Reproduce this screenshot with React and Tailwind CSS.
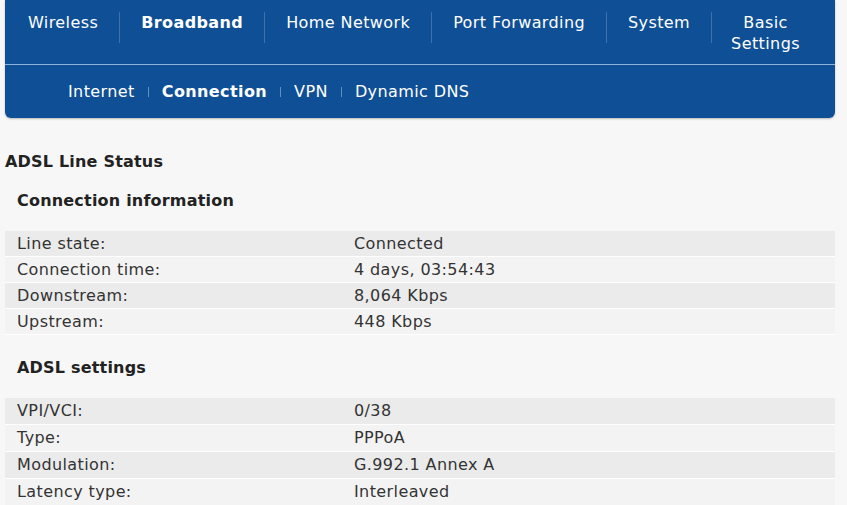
import React from "react";

const topItems = [
  { label: "Wireless" },
  { label: "Broadband", active: true },
  { label: "Home Network" },
  { label: "Port Forwarding" },
  { label: "System" },
];

const subItems = [
  { label: "Internet" },
  { label: "Connection", active: true },
  { label: "VPN" },
  { label: "Dynamic DNS" },
];

const connectionInfo = [
  ["Line state:", "Connected"],
  ["Connection time:", "4 days, 03:54:43"],
  ["Downstream:", "8,064 Kbps"],
  ["Upstream:", "448 Kbps"],
];

const adslSettings = [
  ["VPI/VCI:", "0/38"],
  ["Type:", "PPPoA"],
  ["Modulation:", "G.992.1 Annex A"],
  ["Latency type:", "Interleaved"],
];

const InfoTable = ({ rows, tall }) => (
  <div className="mr-[12px] flex flex-col">
    {rows.map(([label, value], i) => (
      <div
        key={label}
        className={`flex items-center border-b border-white text-[#333] ${
          tall ? "h-[27px]" : "h-[26px]"
        } ${i % 2 === 0 ? "bg-[#ebebeb]" : "bg-[#f3f3f3]"}`}
      >
        <span className="w-[349px] shrink-0 pl-[12px]">{label}</span>
        <span>{value}</span>
      </div>
    ))}
  </div>
);

const App = () => {
  return (
    <div
      className="min-h-[505px] w-full bg-[#f7f7f7] text-[16px] leading-[20px] tracking-[0.4px]"
      style={{ fontFamily: '"DejaVu Sans", Verdana, sans-serif' }}
    >
      <nav className="mx-[5px] mr-[12px] rounded-b-[6px] bg-[#0f4f96] text-white shadow-[0_1px_2px_rgba(0,0,0,0.25)]">
        <div className="flex h-[65px] items-start border-b border-[#8fb4dc] pl-[23px] pt-[12px]">
          {topItems.map((item) => (
            <React.Fragment key={item.label}>
              <span className={`leading-[21px] ${item.active ? "font-bold" : ""}`}>
                {item.label}
              </span>
              <span className="mx-[21px] h-[31px] w-px bg-[#3d72b0]" />
            </React.Fragment>
          ))}
          <span className="-ml-[2px] flex flex-col items-center leading-[21px]">
            <span>Basic</span>
            <span>Settings</span>
          </span>
        </div>
        <div className="flex h-[53px] items-center pl-[63px]">
          {subItems.map((item, i) => (
            <React.Fragment key={item.label}>
              {i > 0 && <span className="mx-[13px] h-[10px] w-px bg-[#5f8fc4]" />}
              <span className={item.active ? "font-bold" : ""}>{item.label}</span>
            </React.Fragment>
          ))}
        </div>
      </nav>

      <h1 className="ml-[5px] mt-[34px] font-bold tracking-[0.2px] text-[#222]">
        ADSL Line Status
      </h1>
      <h2 className="ml-[17px] mt-[19px] font-bold tracking-[0.2px] text-[#222]">
        Connection information
      </h2>
      <div className="ml-[5px] mt-[20px]">
        <InfoTable rows={connectionInfo} />
      </div>

      <h2 className="ml-[17px] mt-[23px] font-bold tracking-[0.2px] text-[#222]">
        ADSL settings
      </h2>
      <div className="ml-[5px] mt-[20px]">
        <InfoTable rows={adslSettings} tall />
      </div>
    </div>
  );
};

export default App;
